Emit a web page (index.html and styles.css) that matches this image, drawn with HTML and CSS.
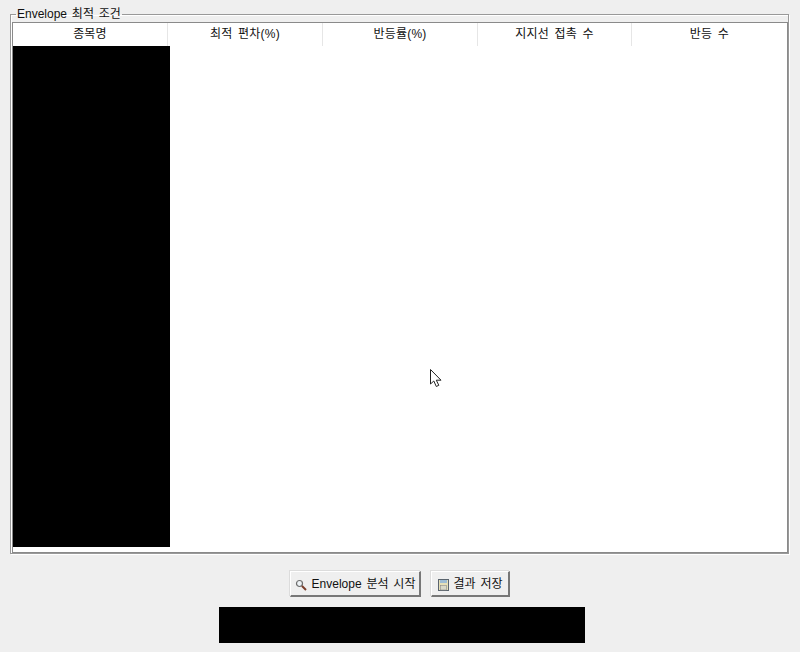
FILE: index.html
```html
<!DOCTYPE html>
<html lang="ko">
<head>
<meta charset="utf-8">
<title>Envelope 최적 조건</title>
<link rel="stylesheet" href="styles.css">
</head>
<body>
<main class="window">
  <fieldset class="group">
    <legend class="group-title">Envelope 최적 조건</legend>
    <div class="list">
      <div class="list-head">
        <div class="col">종목명</div>
        <div class="col">최적 편차(%)</div>
        <div class="col">반등률(%)</div>
        <div class="col">지지선 접촉 수</div>
        <div class="col col-last">반등 수</div>
      </div>
      <div class="list-body">
        <div class="redacted-col"></div>
        <svg class="cursor" width="14" height="20" viewBox="0 0 14 20">
          <path d="M1.5 1.5V16L4.8 13L7.3 18.5L9.8 17.3L7.3 12.2H12L1.5 1.5Z" fill="#fff" stroke="#222" stroke-width="1"/>
        </svg>
      </div>
    </div>
  </fieldset>
  <div class="actions">
    <button class="btn btn-start" type="button">
      <svg class="icon" width="12" height="12" viewBox="0 0 12 12">
        <circle cx="4.5" cy="4.5" r="3" fill="#eef3f6" stroke="#6d6d6d" stroke-width="1.2"/>
        <path d="M7 7L11 11" stroke="#7a3d2a" stroke-width="2"/>
      </svg>
      <span>Envelope 분석 시작</span>
    </button>
    <button class="btn btn-save" type="button">
      <svg class="icon" width="11" height="12" viewBox="0 0 11 12">
        <rect x="0.5" y="0.5" width="10" height="11" fill="#e6e0b8" stroke="#5a646e"/>
        <rect x="2" y="1" width="7" height="3" fill="#9dbcd4"/>
        <rect x="2.5" y="6.5" width="6" height="4.5" fill="#d9d9c8" stroke="#8a8a8a" stroke-width="0.6"/>
      </svg>
      <span>결과 저장</span>
    </button>
  </div>
  <div class="status-row"><div class="redacted-bar"></div></div>
</main>
</body>
</html>
```
FILE: styles.css
```css
* { box-sizing: border-box; }
html, body { margin: 0; padding: 0; }
body {
  width: 800px;
  height: 652px;
  overflow: hidden;
  background: #efefef;
  font-family: "Liberation Sans", "Noto Sans CJK KR", sans-serif;
  font-size: 12px;
  word-spacing: 1.5px;
  color: #000;
}
.window {
  display: flex;
  flex-direction: column;
  height: 652px;
  padding: 7px 10px 9px 10px;
}
.group {
  margin: 0;
  padding: 0 0 0 1px;
  width: 779px;
  height: 547px;
  border: 1px solid #999;
  box-shadow: 1px 1px 0 #fff, inset 1px 1px 0 #fff;
  min-width: 0;
}
.group-title {
  margin-left: 4px;
  padding: 0 1px;
  height: 14px;
  line-height: 14px;
  font-size: 12px;
  color: #111;
}
.list {
  width: 776px;
  height: 531px;
  margin-top: 1px;
  background: #fff;
  border: 1px solid #8a8a8a;
  display: flex;
  flex-direction: column;
}
.list-head {
  display: grid;
  grid-template-columns: 155px 155px 155px 154px 1fr;
  height: 23px;
  flex: none;
}
.col {
  text-align: center;
  line-height: 22px;
  font-size: 12px;
  letter-spacing: 0.2px;
  word-spacing: 2px;
  border-right: 1px solid #e6e6e6;
  color: #111;
}
.col-last { border-right: 0; }
.list-body {
  position: relative;
  flex: 1;
}
.redacted-col {
  width: 157px;
  height: 501px;
  background: #000;
}
.cursor {
  position: absolute;
  left: 416px;
  top: 322px;
}
.actions {
  display: flex;
  justify-content: center;
  gap: 10px;
  margin-top: 17px;
  padding-right: 1px;
  height: 26px;
}
.btn {
  display: flex;
  align-items: center;
  justify-content: center;
  gap: 5px;
  height: 26px;
  padding: 0 0 2px 1px;
  font: inherit;
  font-size: 12px;
  word-spacing: 1.5px;
  color: #111;
  background: #efefef;
  border: 1px solid #fff;
  border-right: 2px solid #777;
  border-bottom: 2px solid #777;
  box-shadow: -1px -1px 0 #dcdcdc;
}
.btn-start { width: 131px; }
.btn-save { width: 79px; }
.icon { flex: none; margin-top: 5px; }
.status-row {
  display: flex;
  margin-top: 10px;
  padding-left: 209px;
}
.redacted-bar {
  width: 366px;
  height: 36px;
  background: #000;
}
```
